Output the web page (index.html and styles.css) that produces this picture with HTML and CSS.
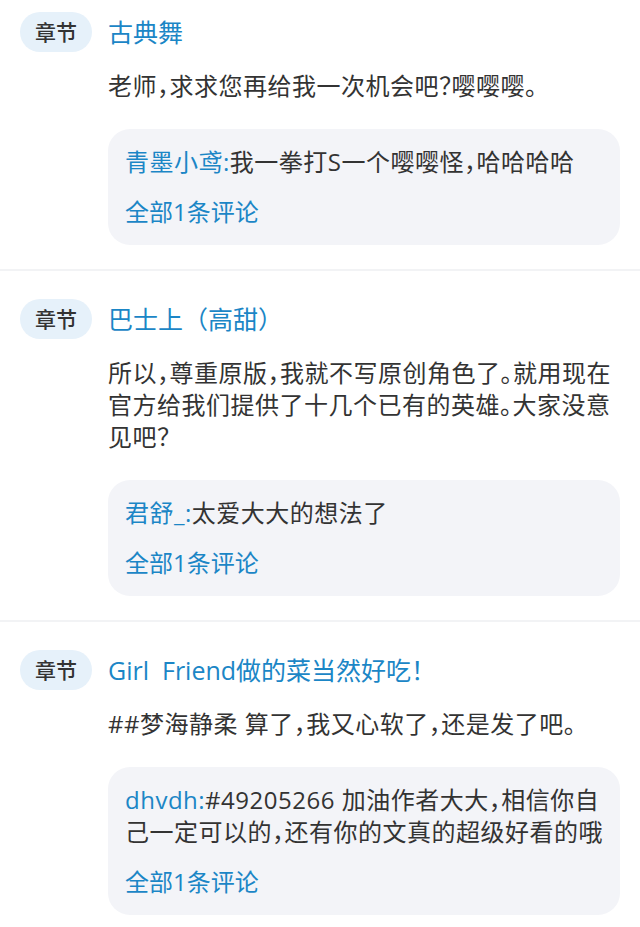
FILE: index.html
```html
<!DOCTYPE html>
<html lang="zh-cn">
	<head>
		<meta charset="utf-8" />
		<title>章节评论</title>
		<link rel="stylesheet" href="styles.css">
	</head>
	<body>
		<div class="list">
			<div class="section">
				<div class="head">
					<span class="tag">章节</span>
					<span class="title">古典舞</span>
				</div>
				<div class="main">
					<p class="text">老师，求求您再给我一次机会吧？嘤嘤嘤。</p>
					<div class="box">
						<p class="comment"><span class="name">青墨小鸢:</span>我一拳打S一个嘤嘤怪，哈哈哈哈</p>
						<p class="all">全部1条评论</p>
					</div>
				</div>
			</div>
			<div class="section">
				<div class="head">
					<span class="tag">章节</span>
					<span class="title">巴士上（高甜）</span>
				</div>
				<div class="main">
					<p class="text">所以，尊重原版，我就不写原创角色了。就用现在官方给我们提供了十几个已有的英雄。大家没意见吧？</p>
					<div class="box">
						<p class="comment"><span class="name">君舒_:</span>太爱大大的想法了</p>
						<p class="all">全部1条评论</p>
					</div>
				</div>
			</div>
			<div class="section">
				<div class="head">
					<span class="tag">章节</span>
					<span class="title">Girl&nbsp; Friend做的菜当然好吃！</span>
				</div>
				<div class="main">
					<p class="text">##梦海静柔 算了，我又心软了，还是发了吧。</p>
					<div class="box">
						<p class="comment"><span class="name">dhvdh:</span>#49205266 加油作者大大，相信你自己一定可以的，还有你的文真的超级好看的哦</p>
						<p class="all">全部1条评论</p>
					</div>
				</div>
			</div>
		</div>
	</body>
</html>
```

FILE: styles.css
```css
*{
	padding:0;
	margin:0;
}
body {
	background-color: #fff;
	font-family: "Open Sans", "Noto Sans CJK SC", sans-serif;
	color: #333;
}
.section {
	padding: 28px 20px 24px;
	border-bottom: 2px solid #f2f3f5;
}
.section:first-child {
	padding-top: 12px;
}
.head {
	display: flex;
	align-items: center;
	gap: 16px;
}
.tag {
	width: 72px;
	height: 40px;
	border-radius: 20px;
	background-color: #e6f1fa;
	font-size: 21px;
	font-weight: 500;
	line-height: 40px;
	text-align: center;
	color: #333;
}
.title {
	font-size: 25px;
	line-height: 34px;
	color: #1b86c6;
}
.main {
	margin-left: 88px;
}
.text {
	margin-top: 18px;
	font-size: 24px;
	line-height: 32px;
	letter-spacing: 0.5px;
	font-feature-settings: "halt";
}
.box {
	margin-top: 27px;
	padding: 17px 10px 17px 17px;
	border-radius: 22px;
	background-color: #f3f4f8;
}
.comment {
	font-size: 24px;
	line-height: 32px;
	letter-spacing: 0.5px;
	font-feature-settings: "halt";
}
.name {
	color: #1b86c6;
}
.all {
	margin-top: 18px;
	font-size: 24px;
	line-height: 32px;
	color: #1b86c6;
}
```
